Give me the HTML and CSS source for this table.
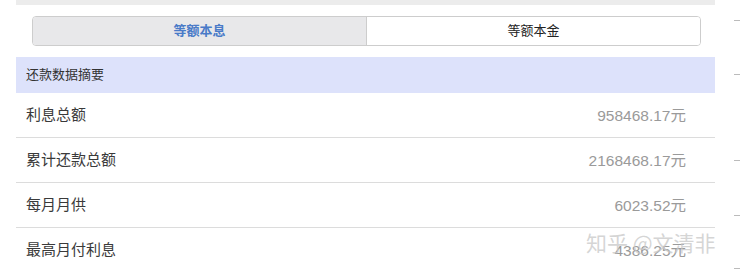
FILE: index.html
```html
<!DOCTYPE html>
<html lang="zh-CN">
<head>
<meta charset="utf-8">
<link rel="stylesheet" href="styles.css">
</head>
<body>
<div class="page">
  <div class="main">
    <div class="topbar"></div>
    <div class="seg-wrap">
      <div class="seg">
        <div class="seg-item active">等额本息</div>
        <div class="seg-item">等额本金</div>
      </div>
    </div>
    <div class="head">还款数据摘要</div>
    <div class="row"><span class="label">利息总额</span><span class="value">958468.17元</span></div>
    <div class="row"><span class="label">累计还款总额</span><span class="value">2168468.17元</span></div>
    <div class="row"><span class="label">每月月供</span><span class="value">6023.52元</span></div>
    <div class="row"><span class="label">最高月付利息</span><span class="value">4386.25元</span></div>
  </div>
  <div class="side">
    <span class="dash d1"></span>
    <span class="dash d2"></span>
    <span class="dash d3"></span>
    <span class="dash d4"></span>
    <span class="dash d5"></span>
  </div>
  <div class="watermark">知乎 @文清非</div>
</div>
</body>
</html>
```
FILE: styles.css
```css
html, body {
  margin: 0;
  padding: 0;
  background: #fff;
  overflow: hidden;
}
body {
  font-family: "Liberation Sans", "Noto Sans CJK SC", sans-serif;
}
.page {
  position: relative;
  width: 740px;
  height: 270px;
  display: flex;
  align-items: flex-start;
}
.main {
  margin-left: 16px;
  width: 699px;
  display: flex;
  flex-direction: column;
  flex: none;
}
.main > * {
  flex: none;
  box-sizing: border-box;
}
.topbar {
  height: 5px;
  background: #ececec;
}
.seg-wrap {
  padding: 11px 14px 11px 16px;
}
.seg {
  display: flex;
  height: 28px;
  border: 1px solid #cdcdcd;
  border-radius: 4px;
  overflow: hidden;
}
.seg-item {
  flex: 1;
  display: flex;
  align-items: center;
  justify-content: center;
  padding-bottom: 3px;
  font-size: 13px;
  color: #222;
  background: #fff;
}
.seg-item.active {
  background: #e8e8ea;
  color: #4a7bc8;
  font-weight: bold;
  border-right: 1px solid #cdcdcd;
}
.head {
  height: 36px;
  background: #dde2fb;
  display: flex;
  align-items: center;
  padding: 0 0 3px 10px;
  font-size: 13px;
  color: #333;
}
.row {
  height: 45px;
  display: flex;
  align-items: center;
  justify-content: space-between;
  padding: 0 29px 3px 10px;
  border-bottom: 1px solid #dcdcdc;
  font-size: 15px;
}
.label {
  color: #3a3a3a;
}
.value {
  color: #9a9a9a;
  font-size: 15.5px;
}
.side {
  position: relative;
  flex: 1;
  align-self: stretch;
}
.dash {
  position: absolute;
  right: 0;
  width: 6px;
  height: 1px;
  background: #bbb;
}
.d1 { top: 20px; }
.d2 { top: 74px; }
.d3 { top: 160px; }
.d4 { top: 215px; }
.d5 { top: 268px; }
.watermark {
  position: absolute;
  left: 586px;
  top: 227px;
  font-family: "Noto Sans CJK SC", sans-serif;
  font-size: 21px;
  color: rgba(200, 200, 200, 0.75);
}
```
